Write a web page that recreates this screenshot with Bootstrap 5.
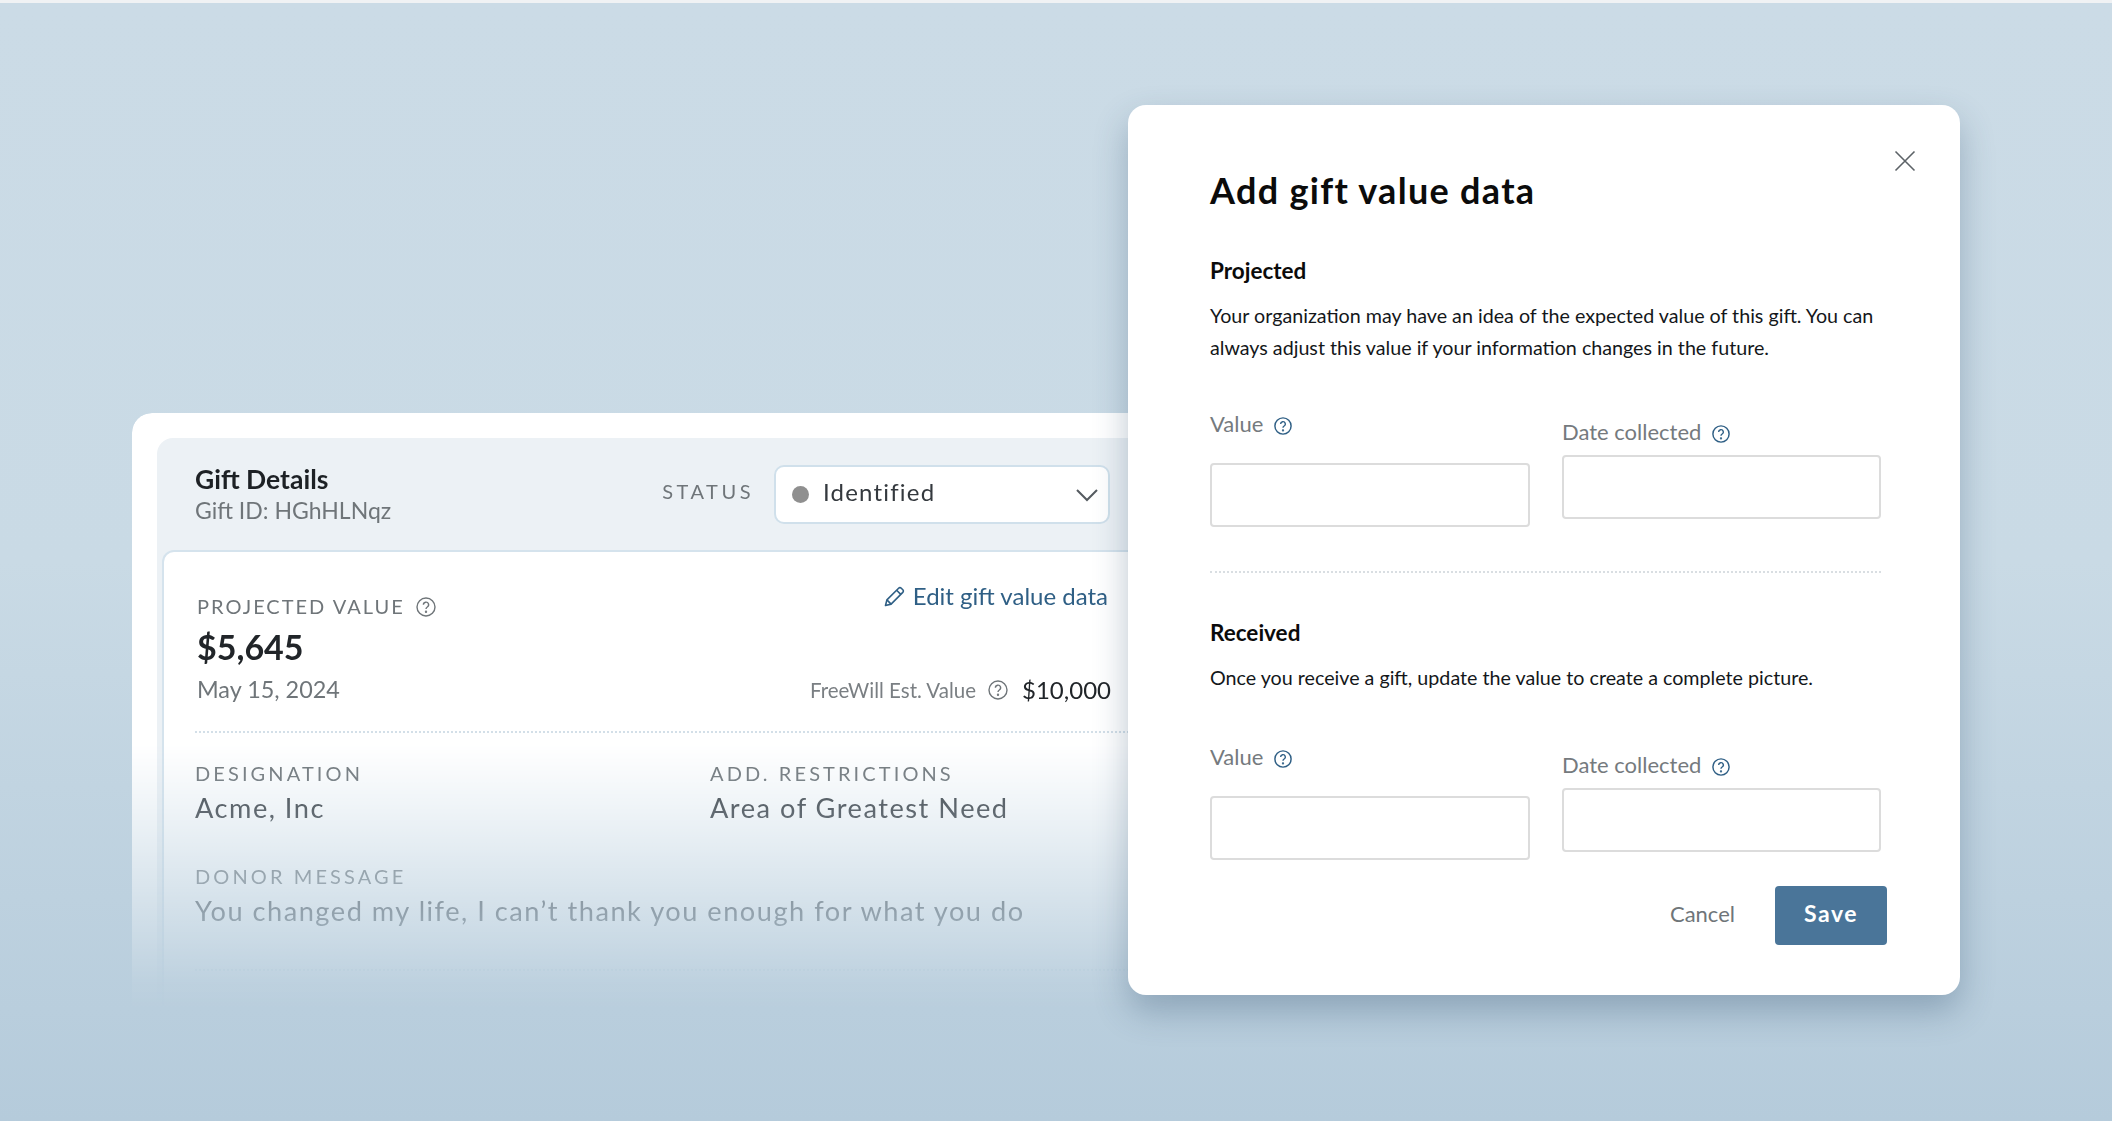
<!DOCTYPE html>
<html lang="en">
<head>
<meta charset="utf-8">
<title>Add gift value data</title>
<link href="https://cdn.jsdelivr.net/npm/bootstrap@5.3.0/dist/css/bootstrap.min.css" rel="stylesheet">
<style>
html,body{height:100%}
body{margin:0;font-family:"Lato","Noto Sans",sans-serif;background:#cbdbe6}
.stage{position:relative;width:2112px;height:1121px;overflow:hidden;border-top:3px solid #f0f2f4;background:linear-gradient(180deg,#cbdbe6 0%,#c9dae5 50%,#b5cbdb 100%)}
.back-sheet{position:absolute;left:132px;top:410px;width:1040px;height:640px;background:#fff;border-radius:20px;padding:25px;-webkit-mask-image:linear-gradient(#000 330px,rgba(0,0,0,.32) 500px,rgba(0,0,0,.06) 570px,transparent 600px);mask-image:linear-gradient(#000 330px,rgba(0,0,0,.32) 500px,rgba(0,0,0,.06) 570px,transparent 600px)}
.head-panel{background:#ecf1f5;border-radius:16px 16px 0 0;padding:0 0 0 5px;height:600px}
.head-row{height:112px;padding:0 0 0 33px}
.gift-title{font-size:26.5px;font-weight:700;color:#1d2125;line-height:32px}
.gift-id{font-size:23px;color:#6f7579;line-height:30px}
.caps-label{font-size:20px;letter-spacing:3.1px;color:#6f7579;line-height:26px}
.status-label{letter-spacing:3.5px;padding-bottom:6px}
.status-box{width:336px;height:59px;border:2px solid #d0e0eb;border-radius:10px;background:#fff;padding:0 10px 4px 16px;margin-left:20px;margin-right:37px}
.status-dot{width:17px;height:17px;background:#8f8f8f;border-radius:50%;margin-right:14px;margin-top:4px}
.status-text{font-size:24px;letter-spacing:1.2px;color:#34393e}
.status-chev{margin-top:6px}
.inner-sheet{background:#fff;border:2px solid #d5e3ed;border-bottom:0;border-radius:12px 12px 0 0;height:490px;padding:32px 0 0 31px}
.top-block{width:916px;padding-left:2px}
.proj-label{margin-top:9px;letter-spacing:2px}
.amount{font-size:34px;font-weight:700;color:#212529;line-height:46px;margin-top:5px}
.gift-date{font-size:23.4px;color:#6f7579;line-height:30px;margin-top:4px}
.edit-link{font-size:24px;color:#2f5f85;text-decoration:none;line-height:32px;margin-top:-4px;margin-right:3px}
.est-row{margin-bottom:-4px}
.est-label{font-size:20.5px;color:#7a7f83}
.est-value{font-size:24px;color:#212529;margin-left:14px}
.help-icon{display:inline-block;vertical-align:-3px}
.est-help{margin-left:12px}
.proj-help{margin-left:4px}
.dots{border-top:2px dotted #d3dfe8}
.modal-dots{border-top:2px dotted #d9dee2;margin-top:44px}
.first-dots{margin-top:27px}
.info-row{margin-top:27px}
.info-block{width:515px}
.info-value{font-size:27.2px;letter-spacing:1.5px;color:#3b4045;line-height:34px;margin-top:5px}
.message-block{margin-top:38px}
.last-dots{margin-top:41px}
.modal-sheet{position:absolute;left:1128px;top:102px;width:832px;height:890px;background:#fff;border-radius:18px;box-shadow:0 16px 34px rgba(45,75,105,.32);padding:0 79px 0 82px}
.close-x{position:absolute;left:766px;top:45px;background:none;border:0;padding:0;line-height:0}
.modal-title{font-size:36px;font-weight:700;letter-spacing:1.3px;color:#0b0b0b;line-height:44px;margin:0;padding-top:63px}
.section-title{font-size:22.5px;font-weight:700;color:#0b0b0b;line-height:30px;margin:0}
.title-gap{margin-top:44px}
.received-gap{margin-top:45px}
.section-text{font-size:19.7px;color:#14171a;line-height:32px;margin:14px 0 0}
.fields-first{margin-top:45px;gap:32px}
.fields-second{margin-top:48px;gap:32px}
.field-label{font-size:22px;color:#757a7e;line-height:30px}
.field-help{margin-left:5px}
.field-input{display:block;height:64px;border:2px solid #dcdcdc;border-radius:4px;background:#fff;width:100%}
.value-field{width:320px}
.date-field{width:319px;margin-top:8px}
.value-field .field-input{margin-top:24px}
.date-field .field-input{margin-top:8px}
.action-row{margin-right:-6px;margin-top:26px}
.cancel-btn{font-size:22px;color:#6f7579;background:none;border:0;padding:0 0 4px;margin-right:40px}
.save-btn{width:112px;height:59px;background:#4a7599;border:0;border-radius:4px;color:#fff;font-size:23px;font-weight:700;letter-spacing:1.5px;padding:0 0 4px}
</style>
</head>
<body>
<div class="stage">
  <section class="back-sheet">
    <div class="head-panel">
      <div class="head-row d-flex align-items-center">
        <div class="flex-grow-1">
          <div class="gift-title">Gift Details</div>
          <div class="gift-id">Gift ID: HGhHLNqz</div>
        </div>
        <span class="caps-label status-label">STATUS</span>
        <div class="status-box d-flex align-items-center">
          <span class="status-dot"></span>
          <span class="status-text flex-grow-1">Identified</span>
          <svg class="status-chev" width="22" height="13" viewBox="0 0 22 13" fill="none" stroke="#555b60" stroke-width="2"><path d="M1 1l10 10L21 1"/></svg>
        </div>
      </div>
      <div class="inner-sheet">
        <div class="d-flex justify-content-between top-block">
          <div>
            <div class="caps-label proj-label">PROJECTED VALUE
              <svg class="help-icon proj-help" width="20" height="20" viewBox="0 0 20 20" fill="none" stroke="#6f7579" stroke-width="1.4"><circle cx="10" cy="10" r="9"/><path d="M7.4 7.8a2.6 2.6 0 1 1 3.9 2.2c-.9.6-1.3 1-1.3 2"/><circle cx="10" cy="14.8" r=".5"/></svg>
            </div>
            <div class="amount">$5,645</div>
            <div class="gift-date">May 15, 2024</div>
          </div>
          <div class="d-flex flex-column justify-content-between align-items-end">
            <a class="edit-link d-flex align-items-center gap-2" href="#">
              <svg width="21" height="21" viewBox="0 0 21 21" fill="none" stroke="#2f5f85" stroke-width="1.6" stroke-linejoin="round"><path d="M1.5 19.5l1.4-5.6L14.6 2.2a1.9 1.9 0 0 1 2.7 0l1.5 1.5a1.9 1.9 0 0 1 0 2.7L7.1 18.1z"/><path d="M12.6 4.2l4.2 4.2M2.9 13.9l4.2 4.2"/></svg>
              Edit gift value data
            </a>
            <div class="d-flex align-items-center est-row">
              <span class="est-label">FreeWill Est. Value</span>
              <svg class="help-icon est-help" width="20" height="20" viewBox="0 0 20 20" fill="none" stroke="#6f7579" stroke-width="1.4"><circle cx="10" cy="10" r="9"/><path d="M7.4 7.8a2.6 2.6 0 1 1 3.9 2.2c-.9.6-1.3 1-1.3 2"/><circle cx="10" cy="14.8" r=".5"/></svg>
              <span class="est-value">$10,000</span>
            </div>
          </div>
        </div>
        <div class="dots first-dots"></div>
        <div class="d-flex info-row">
          <div class="info-block">
            <div class="caps-label">DESIGNATION</div>
            <div class="info-value">Acme, Inc</div>
          </div>
          <div>
            <div class="caps-label">ADD. RESTRICTIONS</div>
            <div class="info-value">Area of Greatest Need</div>
          </div>
        </div>
        <div class="message-block">
          <div class="caps-label">DONOR MESSAGE</div>
          <div class="info-value">You changed my life, I can’t thank you enough for what you do</div>
        </div>
        <div class="dots last-dots"></div>
      </div>
    </div>
  </section>

  <section class="modal-sheet">
    <button class="close-x" type="button" aria-label="Close">
      <svg width="22" height="22" viewBox="0 0 22 22" fill="none" stroke="#5c6267" stroke-width="1.6"><path d="M1.5 1.5l19 19M20.5 1.5l-19 19"/></svg>
    </button>
    <h2 class="modal-title">Add gift value data</h2>
    <h3 class="section-title title-gap">Projected</h3>
    <p class="section-text">Your organization may have an idea of the expected value of this gift. You can always adjust this value if your information changes in the future.</p>
    <div class="d-flex fields-first">
      <div class="value-field">
        <div class="field-label">Value
          <svg class="help-icon field-help" width="18" height="18" viewBox="0 0 20 20" fill="none" stroke="#2f5f85" stroke-width="1.6"><circle cx="10" cy="10" r="9"/><path d="M7.4 7.8a2.6 2.6 0 1 1 3.9 2.2c-.9.6-1.3 1-1.3 2"/><circle cx="10" cy="14.8" r=".5"/></svg>
        </div>
        <input class="field-input" type="text" aria-label="Value">
      </div>
      <div class="date-field">
        <div class="field-label">Date collected
          <svg class="help-icon field-help" width="18" height="18" viewBox="0 0 20 20" fill="none" stroke="#2f5f85" stroke-width="1.6"><circle cx="10" cy="10" r="9"/><path d="M7.4 7.8a2.6 2.6 0 1 1 3.9 2.2c-.9.6-1.3 1-1.3 2"/><circle cx="10" cy="14.8" r=".5"/></svg>
        </div>
        <input class="field-input" type="text" aria-label="Date collected">
      </div>
    </div>
    <div class="modal-dots"></div>
    <h3 class="section-title received-gap">Received</h3>
    <p class="section-text">Once you receive a gift, update the value to create a complete picture.</p>
    <div class="d-flex fields-second">
      <div class="value-field">
        <div class="field-label">Value
          <svg class="help-icon field-help" width="18" height="18" viewBox="0 0 20 20" fill="none" stroke="#2f5f85" stroke-width="1.6"><circle cx="10" cy="10" r="9"/><path d="M7.4 7.8a2.6 2.6 0 1 1 3.9 2.2c-.9.6-1.3 1-1.3 2"/><circle cx="10" cy="14.8" r=".5"/></svg>
        </div>
        <input class="field-input" type="text" aria-label="Value received">
      </div>
      <div class="date-field">
        <div class="field-label">Date collected
          <svg class="help-icon field-help" width="18" height="18" viewBox="0 0 20 20" fill="none" stroke="#2f5f85" stroke-width="1.6"><circle cx="10" cy="10" r="9"/><path d="M7.4 7.8a2.6 2.6 0 1 1 3.9 2.2c-.9.6-1.3 1-1.3 2"/><circle cx="10" cy="14.8" r=".5"/></svg>
        </div>
        <input class="field-input" type="text" aria-label="Date received">
      </div>
    </div>
    <div class="d-flex justify-content-end align-items-center action-row">
      <button class="cancel-btn" type="button">Cancel</button>
      <button class="save-btn" type="button">Save</button>
    </div>
  </section>
</div>
<script src="https://cdn.jsdelivr.net/npm/bootstrap@5.3.0/dist/js/bootstrap.bundle.min.js"></script>
</body>
</html>
